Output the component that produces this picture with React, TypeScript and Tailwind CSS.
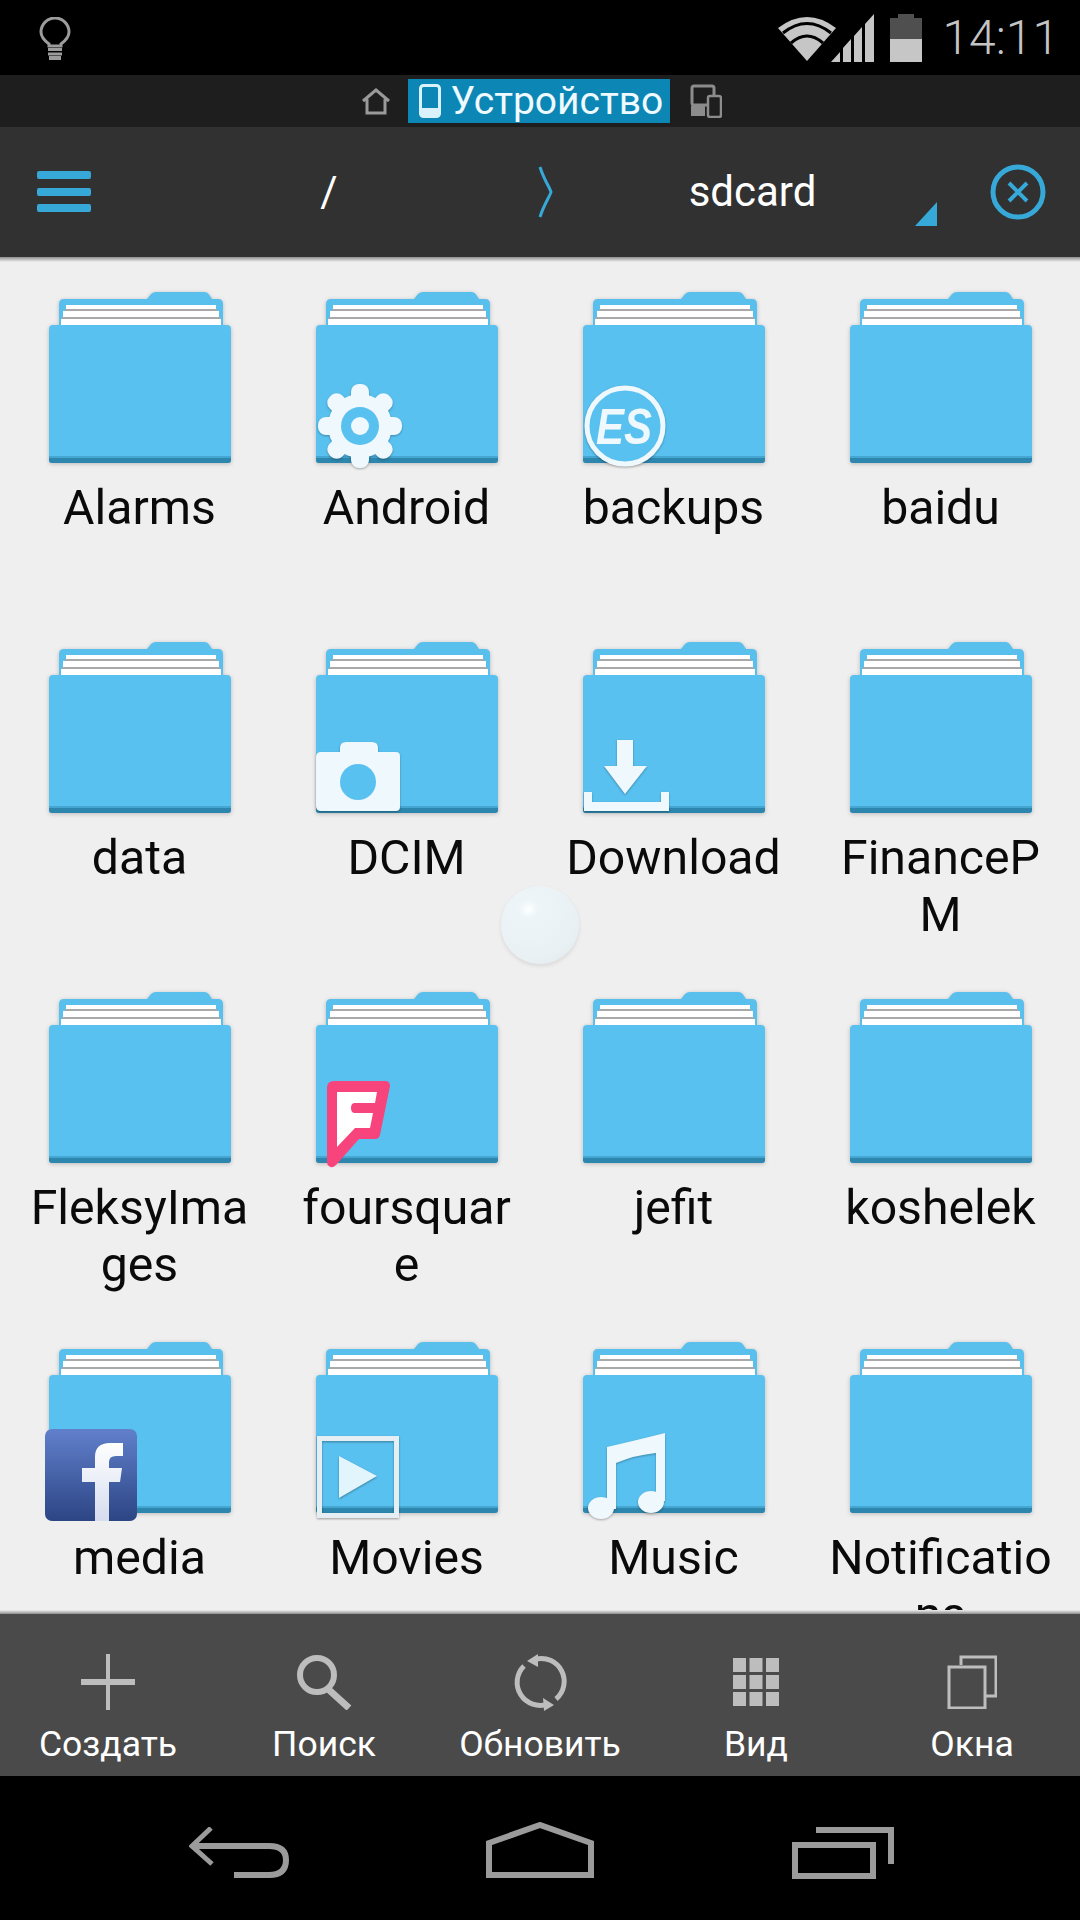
import React from 'react';

const FONT = "font-['Roboto',sans-serif]";

const FolderShape: React.FC = () => (
  <svg width="184" height="172" viewBox="0 0 184 172" className="block drop-shadow-[0_1px_2px_rgba(0,0,0,0.22)]">
    <path d="M99 7 L103 2 Q105 0 108 0 L156 0 Q160 0 162 4 L164 7 L170 7 Q175 7 175 12 L175 40 L11 40 L11 12 Q11 7 16 7 Z" fill="#59bfec" />
    <rect x="18" y="13" width="150" height="4" fill="#ffffff" />
    <rect x="17" y="17" width="152" height="2" fill="#a9a9a9" />
    <rect x="15" y="19" width="156" height="6" fill="#ffffff" />
    <rect x="14" y="25" width="158" height="2" fill="#a9a9a9" />
    <rect x="13" y="27" width="160" height="7" fill="#ffffff" />
    <path d="M1 37 Q1 33 5 33 L179 33 Q183 33 183 37 L183 168 Q183 171 180 171 L4 171 Q1 171 1 168 Z" fill="#59c1f0" />
    <path d="M1 166 L183 166 L183 168 Q183 171 180 171 L4 171 Q1 171 1 168 Z" fill="#2c86ad" />
    <rect x="1" y="164" width="182" height="2" fill="#45a6d2" />
  </svg>
);

const GearBadge = () => (
  <svg width="84" height="84" viewBox="-42 -42 84 84" className="absolute left-[3px] top-[92px] drop-shadow-[0_1px_1px_rgba(0,0,0,0.3)]">
    {[0, 45, 90, 135, 180, 225, 270, 315].map((a) => (
      <rect key={a} x="-9" y="-42" width="18" height="24" rx="8" fill="#eef8fd" transform={`rotate(${a})`} />
    ))}
    <circle r="32" fill="#eef8fd" />
    <circle r="19" fill="#59c1f0" />
    <circle r="9" fill="#eef8fd" />
  </svg>
);

const EsBadge = () => (
  <svg width="82" height="84" viewBox="0 0 82 84" className="absolute left-[2px] top-[92px] drop-shadow-[0_1px_1px_rgba(0,0,0,0.3)]">
    <circle cx="41" cy="42" r="38" fill="#59c1f0" stroke="#eef8fd" strokeWidth="5" />
    <text x="40" y="60" textAnchor="middle" fontFamily="Liberation Sans, sans-serif" fontWeight="700" fontStyle="italic" fontSize="50" fill="#eef8fd" textLength="56" lengthAdjust="spacingAndGlyphs">ES</text>
  </svg>
);

const CameraBadge = () => (
  <svg width="84" height="70" viewBox="0 0 84 70" className="absolute left-[1px] top-[100px] drop-shadow-[0_1px_1px_rgba(0,0,0,0.3)]">
    <path d="M24 10 L24 6 Q24 0 30 0 L56 0 Q62 0 62 6 L62 10 L80 10 Q84 10 84 14 L84 65 Q84 69 80 69 L5 69 Q0 69 0 64 L0 15 Q0 10 5 10 Z" fill="#eef8fd" />
    <circle cx="42" cy="40" r="18" fill="#59c1f0" />
  </svg>
);

const DownloadBadge = () => (
  <svg width="86" height="73" viewBox="0 0 86 73" className="absolute left-[1px] top-[98px] drop-shadow-[0_1px_1px_rgba(0,0,0,0.3)]">
    <path d="M34 0 L50 0 L50 26 L64 26 L42 54 L21 26 L34 26 Z" fill="#eef8fd" />
    <path d="M1 52 L9 52 L9 62 L78 62 L78 52 L86 52 L86 71 L1 71 Z" fill="#eef8fd" />
  </svg>
);

const FoursquareBadge = () => (
  <svg width="64" height="87" viewBox="0 0 64 87" className="absolute left-[12px] top-[89px]">
    <path d="M7 0 L58 0 Q63 0 63 5 L53 54 Q52 58 48 58 L32 58 L9 84 Q5 88 2 85 Q0 84 0 81 L0 7 Q0 0 7 0 Z" fill="#f8447c" />
    <path d="M10 11 L50 11 L48 22 L28 22 Q24 22 24 27 Q24 32 28 32 L46 32 L43 47 L28 47 L10 66 Z" fill="#ffffff" />
  </svg>
);

const FacebookBadge = () => (
  <svg width="92" height="92" viewBox="0 0 92 92" className="absolute left-[-3px] top-[87px]">
    <defs>
      <linearGradient id="fb" x1="0" y1="0" x2="0" y2="1">
        <stop offset="0" stopColor="#6180cc" />
        <stop offset="1" stopColor="#2c4584" />
      </linearGradient>
      <linearGradient id="fbf" x1="0" y1="0" x2="0" y2="1">
        <stop offset="0" stopColor="#ffffff" />
        <stop offset="1" stopColor="#d5dcee" />
      </linearGradient>
    </defs>
    <rect width="92" height="92" rx="7" fill="url(#fb)" />
    <path d="M50 92 L50 53 L37 53 L37 39 L50 39 L50 28 Q50 14 65 14 L78 14 L78 27 L71 27 Q64 27 64 33 L64 39 L77 39 L75 53 L64 53 L64 92 Z" fill="url(#fbf)" />
  </svg>
);

const MovieBadge = () => (
  <svg width="82" height="82" viewBox="0 0 82 82" className="absolute left-[2px] top-[94px] drop-shadow-[0_1px_1px_rgba(0,0,0,0.35)]">
    <rect x="2.5" y="2.5" width="77" height="77" fill="none" stroke="#e4eef3" strokeWidth="5" />
    <path d="M22 20 L60 40 L22 62 Z" fill="#e2f4fc" />
  </svg>
);

const MusicBadge = () => (
  <svg width="80" height="88" viewBox="0 0 80 88" className="absolute left-[5px] top-[91px] drop-shadow-[0_1px_1px_rgba(0,0,0,0.3)]">
    <path d="M20 14 Q46 8 78 0 L78 68 L69 68 L69 20 Q48 22 29 30 L29 76 L20 76 Z" fill="#eef8fd" />
    <ellipse cx="14" cy="75" rx="13" ry="11" fill="#eef8fd" />
    <ellipse cx="64" cy="69" rx="13" ry="11" fill="#eef8fd" />
  </svg>
);

const folders: { name: string; badge?: React.ReactNode }[] = [
  { name: 'Alarms' },
  { name: 'Android', badge: <GearBadge /> },
  { name: 'backups', badge: <EsBadge /> },
  { name: 'baidu' },
  { name: 'data' },
  { name: 'DCIM', badge: <CameraBadge /> },
  { name: 'Download', badge: <DownloadBadge /> },
  { name: 'FinancePM' },
  { name: 'FleksyImages' },
  { name: 'foursquare', badge: <FoursquareBadge /> },
  { name: 'jefit' },
  { name: 'koshelek' },
  { name: 'media', badge: <FacebookBadge /> },
  { name: 'Movies', badge: <MovieBadge /> },
  { name: 'Music', badge: <MusicBadge /> },
  { name: 'Notifications' },
];

const StatusBar = () => (
  <div className="h-[75px] bg-black flex items-center justify-between pl-[39px] pr-[21px]">
    <svg width="32" height="44" viewBox="0 0 32 44" fill="none" stroke="#9c9c9c" strokeWidth="3" className="mt-[2px]">
      <path d="M10 27 Q2 21 2 15 A14 14 0 0 1 30 15 Q30 21 22 27 V29 H10 Z" />
      <path d="M9 32.5 H23 M9 37 H23" />
      <rect x="10" y="39" width="12" height="4" fill="#9c9c9c" stroke="none" />
    </svg>
    <div className="flex items-center">
      <svg width="58" height="44" viewBox="0 0 58 44" className="mt-[2px]">
        <path d="M0 11 Q29 -11 58 11 L29 44 Z" fill="#c6c6c6" />
        <path d="M5 16 Q29 -3 53 16" fill="none" stroke="#000" strokeWidth="3" />
        <path d="M13 26 Q29 12 45 26" fill="none" stroke="#000" strokeWidth="3" />
      </svg>
      <svg width="44" height="48" viewBox="0 0 44 48" className="ml-[-5px]">
        <path d="M0 48 L9 38 V48 Z M12 34 L20 25 V48 H12 Z M23 22 L31 13 V48 H23 Z M34 10 L43 0 V48 H34 Z" fill="#c6c6c6" />
      </svg>
      <svg width="32" height="48" viewBox="0 0 32 48" className="ml-[15px]">
        <path d="M8 0 H24 V4 H32 V25 H0 V4 H8 Z" fill="#4f4f4f" />
        <rect y="25" width="32" height="23" fill="#c6c6c6" />
      </svg>
      <span className={`${FONT} ml-[20px] text-[48px] leading-none font-light text-[#c4c4c4]`}>14:11</span>
    </div>
  </div>
);

const TabBar = () => (
  <div className="h-[52px] bg-[#1e1e1e] flex items-center justify-center pl-[2px]">
    <svg width="30" height="28" viewBox="0 0 30 28" fill="none" stroke="#9a9a9a" strokeWidth="3">
      <path d="M2 14 L15 3 L28 14 M6 12 V26 H24 V12" />
    </svg>
    <div className="ml-[17px] h-[44px] w-[262px] bg-[#0c86b4] flex items-center pl-[11px]">
      <svg width="22" height="34" viewBox="0 0 22 34" fill="none">
        <rect x="1.5" y="1.5" width="19" height="31" rx="3" stroke="#d9f1fb" strokeWidth="3" />
        <rect x="2" y="24" width="18" height="8" fill="#d9f1fb" />
      </svg>
      <span className={`${FONT} ml-[10px] text-[39px] leading-none text-[#eefaff] whitespace-nowrap`}>Устройство</span>
    </div>
    <svg width="32" height="34" viewBox="0 0 32 34" fill="none" className="ml-[20px]">
      <rect x="2" y="2" width="22" height="19" rx="2" stroke="#8c8c8c" strokeWidth="3" />
      <rect x="1" y="22" width="14" height="10" fill="#8c8c8c" />
      <rect x="18" y="12" width="13" height="21" rx="2" fill="#1e1e1e" stroke="#8c8c8c" strokeWidth="2.5" />
    </svg>
  </div>
);

const PathBar = () => (
  <div className="h-[130px] bg-[#313131] flex items-center">
    <div className="w-[130px] pl-[37px]">
      <svg width="54" height="42" viewBox="0 0 54 42" fill="#36a9d9">
        <rect y="0" width="54" height="8" rx="2" />
        <rect y="17" width="54" height="8" rx="2" />
        <rect y="33" width="54" height="8" rx="2" />
      </svg>
    </div>
    <div className={`${FONT} w-[398px] text-center text-[42px] leading-none text-white`}>/</div>
    <svg width="18" height="52" viewBox="0 0 18 52" fill="none" stroke="#36a9d9" strokeWidth="3" className="ml-[9px]">
      <path d="M3 1 C7 14 13 22 14 26 C13 30 7 38 3 51" />
    </svg>
    <div className={`${FONT} w-[395px] text-center text-[42px] leading-none text-white relative`}>
      sdcard
      <svg width="22" height="24" viewBox="0 0 22 24" className="absolute left-[360px] top-[31px]">
        <path d="M22 0 V24 H0 Z" fill="#36a9d9" />
      </svg>
    </div>
    <svg width="56" height="56" viewBox="0 0 56 56" fill="none" stroke="#36a9d9" className="ml-[40px]">
      <circle cx="28" cy="28" r="25" strokeWidth="5" />
      <path d="M19 19 L37 37 M37 19 L19 37" strokeWidth="4" />
    </svg>
  </div>
);

const tools: { label: string; icon: React.ReactNode }[] = [
  {
    label: 'Создать',
    icon: (
      <svg width="54" height="56" viewBox="0 0 54 56" fill="#bdbdbd">
        <rect x="25" y="0" width="4" height="56" />
        <rect x="0" y="25" width="54" height="6" />
      </svg>
    ),
  },
  {
    label: 'Поиск',
    icon: (
      <svg width="58" height="56" viewBox="0 0 58 56" fill="none" stroke="#bdbdbd">
        <circle cx="22" cy="21" r="17" strokeWidth="6" />
        <path d="M33 35 L54 54" strokeWidth="7" />
      </svg>
    ),
  },
  {
    label: 'Обновить',
    icon: (
      <svg width="60" height="62" viewBox="0 0 60 62" fill="none" stroke="#bdbdbd" strokeWidth="5">
        <path d="M26 8 A23 23 0 0 1 46 48" />
        <path d="M14 15 A23 23 0 0 0 38 53" />
        <path d="M17 10 L28 3 L28 16 Z M44 54 L33 47 L34 60 Z" fill="#bdbdbd" stroke="none" />
      </svg>
    ),
  },
  {
    label: 'Вид',
    icon: (
      <svg width="46" height="48" viewBox="0 0 46 48" fill="#bdbdbd">
        {[0, 17, 34].flatMap((y) =>
          [0, 16.5, 33].map((x) => <rect key={`${x}-${y}`} x={x} y={y} width="13" height="14" />),
        )}
      </svg>
    ),
  },
  {
    label: 'Окна',
    icon: (
      <svg width="50" height="54" viewBox="0 0 50 54" fill="none" stroke="#bdbdbd" strokeWidth="3">
        <path d="M14 10 V2 H49 V41 H38" />
        <rect x="2" y="12" width="36" height="41" />
      </svg>
    ),
  },
];

const Toolbar = () => (
  <div className="h-[162px] bg-[#4a4a4a] grid grid-cols-5">
    {tools.map((tool) => (
      <div key={tool.label} className="flex flex-col items-center">
        <div className="h-[62px] mt-[37px] flex items-center justify-center">{tool.icon}</div>
        <span className={`${FONT} mt-[10px] text-[35.5px] leading-[42px] text-white`}>{tool.label}</span>
      </div>
    ))}
  </div>
);

const NavBar = () => (
  <div className="h-[144px] bg-black flex items-start pt-[46px] pl-[189px]">
    <svg width="100" height="52" viewBox="0 0 100 52" fill="none" stroke="#9b9b9b" strokeWidth="6" className="mt-[5px]">
      <path d="M3 19 H80 Q97 19 97 33 Q97 48 80 48 H45" />
      <path d="M22 1 L3 19 L23 37" strokeWidth="5" strokeLinejoin="miter" />
    </svg>
    <svg width="108" height="56" viewBox="0 0 108 56" fill="none" stroke="#9b9b9b" strokeWidth="6" className="ml-[197px]">
      <path d="M3 53 V21 L54 3 L105 21 V53 Z" />
    </svg>
    <svg width="102" height="52" viewBox="0 0 102 52" fill="none" stroke="#9b9b9b" className="ml-[198px] mt-[5px]">
      <path d="M24 3 H99 V37" strokeWidth="6" />
      <rect x="3" y="18" width="78" height="31" strokeWidth="6" />
    </svg>
  </div>
);

export default function App() {
  return (
    <div className={`${FONT} relative w-[1080px] h-[1920px] flex flex-col bg-[#efefef] overflow-hidden`}>
      <StatusBar />
      <TabBar />
      <PathBar />
      <div className="h-[5px] bg-gradient-to-b from-[#8f8f8f] to-[#efefef]" />
      <div className="flex-1 min-h-0 overflow-hidden">
        <div className="grid grid-cols-4 auto-rows-[350px] px-[6px] pt-[30px]">
          {folders.map((folder) => (
            <div key={folder.name} className="flex flex-col items-center">
              <div className="relative w-[184px]">
                <FolderShape />
                {folder.badge}
              </div>
              <div className="mt-[15px] w-[225px] text-center text-[48.2px] leading-[57px] text-[#0a0a0a] break-all">
                {folder.name}
              </div>
            </div>
          ))}
        </div>
      </div>
      <div className="h-[4px] bg-gradient-to-b from-[#efefef] to-[#8f8f8f]" />
      <Toolbar />
      <NavBar />
      {/* floating ES ball */}
      <div className="absolute left-[501px] top-[886px] w-[78px] h-[78px] rounded-full bg-[radial-gradient(circle_at_35%_30%,#ffffff_0%,#eef5f8_12%,#e8f0f3_70%,#e0e4e5_100%)] shadow-[0_2px_4px_rgba(0,0,0,0.1)]" />
    </div>
  );
}
